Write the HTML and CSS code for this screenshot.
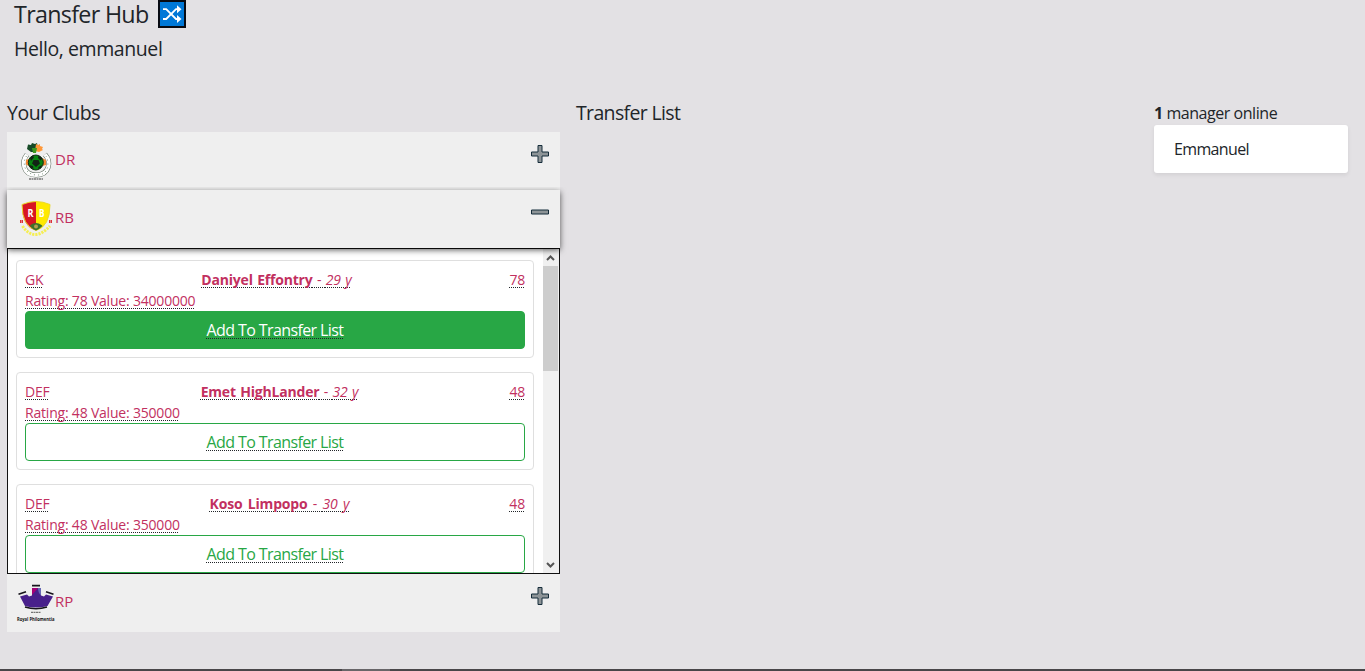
FILE: index.html
```html
<!DOCTYPE html>
<html lang="en">
<head>
<meta charset="utf-8">
<title>Transfer Hub</title>
<link rel="stylesheet" href="styles.css">
</head>
<body>
<header class="top">
  <h1 class="title"><span class="t-hub">Transfer Hub</span>
    <svg class="shuffle" viewBox="0 0 28 28"><path d="M0 0h28v28H0z" fill="#080b12"/><path d="M2 2h24v24H2z" fill="#0078d7"/><g fill="none" stroke="#fff" stroke-width="1.8"><path d="M5 9.2h3.2L18 19h3"/><path d="M5 19h3.2L18 9.2h3"/></g><path d="M19 5.2l4.5 4-4.5 4zM19 15l4.5 4-4.5 4z" fill="#fff"/></svg>
  </h1>
  <h2 class="hello"><span>Hello, emmanuel</span></h2>
</header>
<main class="columns">
  <section class="clubs">
    <h2 class="heading"><span class="t-clubs">Your Clubs</span></h2>
    <div class="club">
      <svg class="logo" viewBox="0 0 42 42"><path d="M13 2.500l3 .5 1-2 3 1 2-1 1 5-3 4h-4l-4-3z" fill="#174b27"/><path d="M21 2l2 1 2-1v2l3 1-1 2 1 1-4 2-4-1z" fill="#ff9838"/><path d="M17 6h5l-1 5h-3z" fill="#3f9b20"/><path d="M12 12.500C6 20 8 33 21 33s16-13 9-20.500" fill="none" stroke="#5c6b5d" stroke-width="5"/><path d="M12 12.500C6 20 8 33 21 33s16-13 9-20.500" fill="none" stroke="#fff" stroke-width="4"/><path d="M11.500 14C7 21 9 32 21 33s14-11 10-19" fill="none" stroke="#78957b" stroke-width="1" stroke-dasharray="1 3"/><path d="M11 18l4-1.500v8l-4-2zM27 16l4 2v5l-4 1z" fill="#f38832"/><circle cx="20.800" cy="20.500" r="7.500" fill="#078510" stroke="#102b12"/><path d="M18.500 18h5l1.500 3.500-4 3.500-4-3.500zM15 16l3-2.500 1 2-3 3.500zM23.500 13.500l4 3-2 2-2.500-2.500zM14 23l4 1 .5 3-3-1zM27 23l-3.500 2-.5 2 3-1z" fill="#122315"/><path d="M14 37h14" stroke="#777" stroke-width="1.300" stroke-dasharray="2 .5"/></svg>
      <span class="name">DR</span>
      <svg class="sign" viewBox="0 0 18 18"><path d="M7 .5h4V7h6.5v4H11v6.5H7V11H.5V7H7z" fill="#8d9497" stroke="#152c3a"/></svg>
    </div>
    <div class="club open">
      <svg class="logo" viewBox="0 0 42 42"><path d="M7 4.500q8-3 14-3v29Q7 27 7 4.500z" fill="#d81622"/><path d="M21 1.500q7 0 14 3 0 22-14 26z" fill="#ffe900"/><path d="M7 4.500q14-6 28 0 0 22-14 26Q7 26 7 4.500z" fill="none" stroke="#ead928" stroke-width="1"/><path d="M15.500 25q5.500-4 11 0l1 1q-3 3-6.500 4.500Q17 29 15 26z" fill="#3d712b"/><circle cx="21" cy="26.500" r="2" fill="#b5a04c"/><text x="12.500" y="17" textLength="6" lengthAdjust="spacingAndGlyphs" class="mono">R</text><text x="24" y="17" textLength="5.500" lengthAdjust="spacingAndGlyphs" class="mono">B</text><path d="M5 21.500h3M34 21.500h3" stroke="#dc3038" stroke-width="3" stroke-dasharray="1.3 .4"/><path d="M7.500 26Q19 43 35 26" fill="none" stroke="#f5ee51" stroke-width="3" stroke-dasharray="2.2 1"/></svg>
      <span class="name">RB</span>
      <svg class="sign" viewBox="0 0 18 18"><path d="M.5 7h17v4H.5z" fill="#8d9497" stroke="#152c3a"/></svg>
    </div>
    <div class="panel">
      <div class="players">
        <article class="player">
          <div class="line"><span class="u">GK</span><span class="u who"><b>Daniyel Effontry</b> - <i>29 y</i></span><span class="u">78</span></div>
          <div class="line"><span class="u">Rating: 78 Value: 34000000</span></div>
          <button class="add solid"><span class="u">Add To Transfer List</span></button>
        </article>
        <article class="player">
          <div class="line"><span class="u">DEF</span><span class="u who"><b>Emet HighLander</b> - <i>32 y</i></span><span class="u">48</span></div>
          <div class="line"><span class="u">Rating: 48 Value: 350000</span></div>
          <button class="add"><span class="u">Add To Transfer List</span></button>
        </article>
        <article class="player">
          <div class="line"><span class="u">DEF</span><span class="u who wide"><b>Koso Limpopo</b> - <i>30 y</i></span><span class="u">48</span></div>
          <div class="line"><span class="u">Rating: 48 Value: 350000</span></div>
          <button class="add"><span class="u">Add To Transfer List</span></button>
        </article>
      </div>
      <div class="scroll">
        <svg class="arrow" viewBox="0 0 16 17"><path d="M4 11l3.500-3.500L11 11" fill="none" stroke="#555" stroke-width="2"/></svg>
        <div class="thumb"></div>
        <svg class="arrow last" viewBox="0 0 16 17"><path d="M4 7l3.500 3.500L11 7" fill="none" stroke="#555" stroke-width="2"/></svg>
      </div>
    </div>
    <div class="club">
      <svg class="logo" viewBox="0 0 42 42"><path d="M5 12.500l7-2 2 2 3-1V4h9v7.500l3 1 2-2 7 2-5.500 9.500q-11.500 3-22.500 0z" fill="#48208b"/><path d="M17 4h6l-6 7z" fill="#a50076"/><path d="M23 4h3v7.500q-3-3-3-7.500z" fill="#6669b5"/><path d="M17 1.700h8M3.500 10.300l7.500-2.500M31 7.800l7.500 2.500M10 23q11 3.500 22 0" fill="none" stroke="#17151c" stroke-width="1.700"/><path d="M16 28.300h10" stroke="#555" stroke-width="1" stroke-dasharray="2 .5"/><text x="2" y="36.500" textLength="37.500" lengthAdjust="spacingAndGlyphs" class="crest">Royal Philomentia</text></svg>
      <span class="name">RP</span>
      <svg class="sign" viewBox="0 0 18 18"><path d="M7 .5h4V7h6.500v4H11v6.500H7V11H.5V7H7z" fill="#8d9497" stroke="#152c3a"/></svg>
    </div>
  </section>
  <section class="transfers"><h2 class="heading"><span class="t-list">Transfer List</span></h2></section>
  <aside class="online">
    <div class="count"><span><b>1</b> manager online</span></div>
    <div class="manager"><span>Emmanuel</span></div>
  </aside>
</main>
<footer class="edge"><div class="edge-mark"></div></footer>
</body>
</html>
```
FILE: styles.css
```css
* { box-sizing: border-box; }
body { margin: 0; height: 671px; display: flex; flex-direction: column; overflow: hidden; background: #e3e1e4; color: #212529; font: 16px/24px "Open Sans", "Noto Sans", sans-serif; }
h1, h2 { margin: 0; font-weight: 400; }
.top { height: 101px; padding-left: 14px; }
.title { display: flex; height: 29px; font-size: 23.3px; line-height: 29px; letter-spacing: -.7px; }
.t-hub { width: 144px; white-space: nowrap; }
.shuffle { width: 28px; height: 28px; }
.hello { margin-top: 8px; font-size: 19.5px; line-height: 24px; letter-spacing: -.42px; }
.columns { flex: 1; display: grid; grid-template-columns: 553px 562px 194px; column-gap: 16px; padding-left: 7px; }
.heading { height: 31px; font-size: 19.5px; line-height: 24px; letter-spacing: -.5px; }
.t-list { letter-spacing: -.65px; }
.club { display: flex; height: 58px; padding: 10px 11px 6px 8px; background: #efefef; }
.open { position: relative; z-index: 1; box-shadow: 0 2px 6px rgba(0,0,0,.65); clip-path: inset(-3px -10px -10px -10px); }
.logo { width: 42px; height: 42px; overflow: visible; }
.name { margin-left: -2px; padding-top: 5px; color: #c2305f; font-size: 15px; letter-spacing: 0; }
.sign { width: 18px; height: 18px; margin: 3px 0 0 auto; }
.mono { font: bold 11px "Open Sans", sans-serif; fill: #fff; }
.crest { font: bold 5px "Open Sans", sans-serif; fill: #111; }
.panel { display: flex; height: 326px; border: 1px solid #111; background: #fff; overflow: hidden; }
.players { flex: 1; padding: 11px 9px 0 8px; }
.player { height: 98px; margin-bottom: 14px; padding: 8px; border: 1px solid #dfdfdf; border-radius: 4px; }
.line { display: flex; justify-content: space-between; height: 21px; color: #c2305f; font-size: 14px; line-height: 21px; letter-spacing: -.2px; white-space: nowrap; }
.who { word-spacing: 1px; }
.wide { word-spacing: 2px; }
.u { text-decoration: underline dotted 1px #212529; text-underline-offset: 2px; text-decoration-skip-ink: none; }
.add { display: block; width: 100%; height: 38px; padding: 0; border: 1px solid #28a745; border-radius: 4px; background: transparent; color: #28a745; font: 16px/24px "Open Sans", sans-serif; letter-spacing: -.6px; }
.solid { background: #28a745; color: #fff; }
.scroll { display: flex; flex-direction: column; width: 16px; background: #f0f0f0; }
.arrow { width: 16px; height: 17px; }
.thumb { width: 15px; height: 105px; background: #cdcdcd; }
.last { margin-top: auto; }
.count { height: 24px; letter-spacing: -.45px; }
.manager { height: 48px; padding: 12px 20px; border-radius: 3px; background: #fff; box-shadow: 0 2px 4px rgba(0,0,0,.075); letter-spacing: -.65px; }
.edge { height: 2px; padding-left: 342px; background: #494649; }
.edge-mark { width: 48px; height: 2px; background: #686568; }
```
